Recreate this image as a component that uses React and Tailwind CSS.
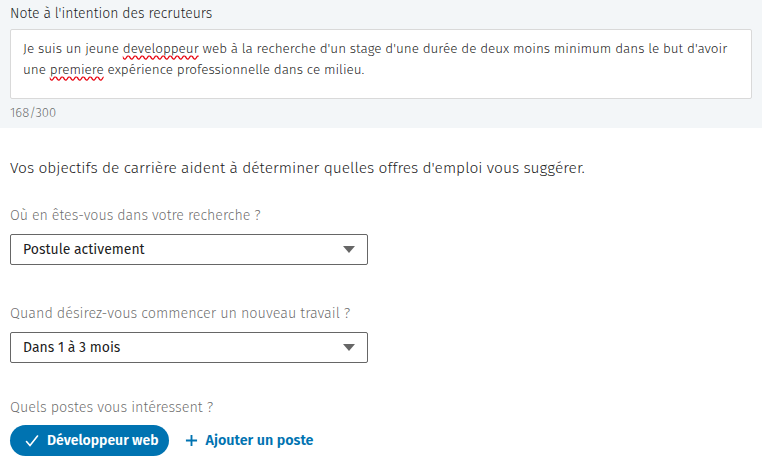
export default function App() {
  const font = { fontFamily: '"Fira Sans", "Noto Sans", "Open Sans", sans-serif' }
  return (
    <div className="w-[762px] h-[476px] bg-white overflow-hidden font-light" style={font}>
      <div className="bg-[#f3f6f8] px-[10px] pt-[4px] h-[128px]">
        <label className="block text-[14px] font-[350] leading-[20px] text-[rgba(0,0,0,0.9)]">
          Note à l'intention des recruteurs
        </label>
        <div className="mt-[5px] h-[70px] bg-white border border-[#d9d9d9] rounded-[2px] px-[12px] pt-[8px] text-[13.5px] leading-[21px] text-[rgba(0,0,0,0.9)]">
          Je suis un jeune{' '}
          <span className="underline decoration-wavy decoration-red-600 underline-offset-2">developpeur</span>{' '}
          web à la recherche d'un stage d'une durée de deux moins minimum dans le but d'avoir une{' '}
          <span className="underline decoration-wavy decoration-red-600 underline-offset-2">premiere</span>{' '}
          expérience professionnelle dans ce milieu.
        </div>
        <div className="mt-[6px] text-[13px] leading-[16px] text-[rgba(0,0,0,0.6)]">168/300</div>
      </div>

      <div className="px-[10px] pt-[29px]">
        <p className="text-[15.5px] leading-[22px] text-[rgba(0,0,0,0.9)]">
          Vos objectifs de carrière aident à déterminer quelles offres d'emploi vous suggérer.
        </p>

        <div className="mt-[27px] text-[14.2px] leading-[20px] text-[rgba(0,0,0,0.6)]">
          Où en êtes-vous dans votre recherche ?
        </div>
        <Select value="Postule activement" />

        <div className="mt-[39px] text-[14.4px] leading-[20px] text-[rgba(0,0,0,0.6)]">
          Quand désirez-vous commencer un nouveau travail ?
        </div>
        <Select value="Dans 1 à 3 mois" />

        <div className="mt-[35px] text-[14.4px] leading-[20px] text-[rgba(0,0,0,0.6)]">
          Quels postes vous intéressent ?
        </div>
        <div className="mt-[7px] flex items-center gap-[16px]">
          <button className="h-[31px] pl-[14px] pr-[10px] rounded-full bg-[#0073b1] text-white font-semibold text-[14px] flex items-center gap-[7px]">
            <svg width="16" height="16" viewBox="0 0 16 16" fill="none" stroke="currentColor" strokeWidth="1.6" strokeLinecap="round">
              <path d="M2.5 8.5l3.5 4L13.5 3" />
            </svg>
            Développeur web
          </button>
          <button className="flex items-center gap-[8px] text-[#0073b1] font-semibold text-[14.3px]">
            <svg width="13" height="13" viewBox="0 0 14 14" stroke="currentColor" strokeWidth="2">
              <path d="M7 1v12M1 7h12" />
            </svg>
            Ajouter un poste
          </button>
        </div>
      </div>
    </div>
  )
}

function Select({ value }) {
  return (
    <div className="mt-[8px] w-[358px] h-[31px] border border-[rgba(0,0,0,0.6)] rounded-[2px] flex items-center justify-between pl-[12px] pr-[12px] text-[14px] font-normal text-[rgba(0,0,0,0.9)]">
      <span>{value}</span>
      <svg width="12" height="7" viewBox="0 0 12 7">
        <path d="M0 0h12L6 7z" fill="rgba(0,0,0,0.6)" />
      </svg>
    </div>
  )
}
